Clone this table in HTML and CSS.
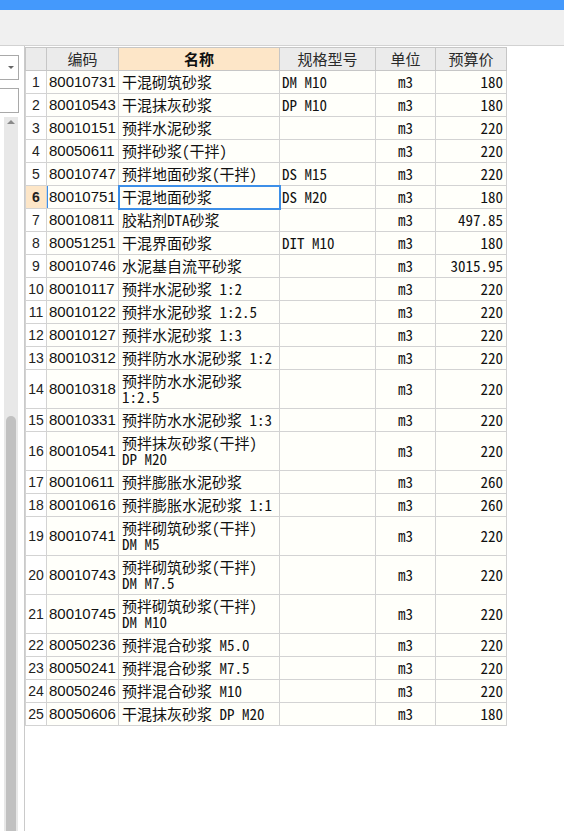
FILE: index.html
```html
<!DOCTYPE html>
<html lang="zh-CN">
<head>
<meta charset="utf-8">
<title>材料</title>
<link rel="stylesheet" href="styles.css">
</head>
<body>
<div class="topbar"></div>
<div class="toolbar"></div>
<div class="main">
  <aside class="side">
    <div class="combo"><span class="caret"></span></div>
    <div class="textbox"></div>
    <div class="scroll">
      <span class="arrow-up"></span>
      <div class="thumb"></div>
    </div>
  </aside>
  <div class="gridarea">
    <table class="grid">
      <colgroup>
        <col class="c-no"><col class="c-code"><col class="c-name"><col class="c-spec"><col class="c-unit"><col class="c-price">
      </colgroup>
      <thead>
        <tr><th></th><th>编码</th><th class="hl">名称</th><th>规格型号</th><th>单位</th><th>预算价</th></tr>
      </thead>
      <tbody>
        <tr><td class="no">1</td><td class="code">80010731</td><td class="name">干混砌筑砂浆</td><td class="spec">DM M10</td><td class="unit">m3</td><td class="price">180</td></tr>
        <tr><td class="no">2</td><td class="code">80010543</td><td class="name">干混抹灰砂浆</td><td class="spec">DP M10</td><td class="unit">m3</td><td class="price">180</td></tr>
        <tr><td class="no">3</td><td class="code">80010151</td><td class="name">预拌水泥砂浆</td><td class="spec"></td><td class="unit">m3</td><td class="price">220</td></tr>
        <tr><td class="no">4</td><td class="code">80050611</td><td class="name">预拌砂浆(干拌)</td><td class="spec"></td><td class="unit">m3</td><td class="price">220</td></tr>
        <tr><td class="no">5</td><td class="code">80010747</td><td class="name">预拌地面砂浆(干拌)</td><td class="spec">DS M15</td><td class="unit">m3</td><td class="price">220</td></tr>
        <tr class="cur"><td class="no">6</td><td class="code">80010751</td><td class="name sel">干混地面砂浆</td><td class="spec">DS M20</td><td class="unit">m3</td><td class="price">180</td></tr>
        <tr><td class="no">7</td><td class="code">80010811</td><td class="name">胶粘剂DTA砂浆</td><td class="spec"></td><td class="unit">m3</td><td class="price">497.85</td></tr>
        <tr><td class="no">8</td><td class="code">80051251</td><td class="name">干混界面砂浆</td><td class="spec">DIT M10</td><td class="unit">m3</td><td class="price">180</td></tr>
        <tr><td class="no">9</td><td class="code">80010746</td><td class="name">水泥基自流平砂浆</td><td class="spec"></td><td class="unit">m3</td><td class="price">3015.95</td></tr>
        <tr><td class="no">10</td><td class="code">80010117</td><td class="name">预拌水泥砂浆 1:2</td><td class="spec"></td><td class="unit">m3</td><td class="price">220</td></tr>
        <tr><td class="no">11</td><td class="code">80010122</td><td class="name">预拌水泥砂浆 1:2.5</td><td class="spec"></td><td class="unit">m3</td><td class="price">220</td></tr>
        <tr><td class="no">12</td><td class="code">80010127</td><td class="name">预拌水泥砂浆 1:3</td><td class="spec"></td><td class="unit">m3</td><td class="price">220</td></tr>
        <tr><td class="no">13</td><td class="code">80010312</td><td class="name">预拌防水水泥砂浆 1:2</td><td class="spec"></td><td class="unit">m3</td><td class="price">220</td></tr>
        <tr><td class="no">14</td><td class="code">80010318</td><td class="name">预拌防水水泥砂浆<br>1:2.5</td><td class="spec"></td><td class="unit">m3</td><td class="price">220</td></tr>
        <tr><td class="no">15</td><td class="code">80010331</td><td class="name">预拌防水水泥砂浆 1:3</td><td class="spec"></td><td class="unit">m3</td><td class="price">220</td></tr>
        <tr><td class="no">16</td><td class="code">80010541</td><td class="name">预拌抹灰砂浆(干拌)<br>DP M20</td><td class="spec"></td><td class="unit">m3</td><td class="price">220</td></tr>
        <tr><td class="no">17</td><td class="code">80010611</td><td class="name">预拌膨胀水泥砂浆</td><td class="spec"></td><td class="unit">m3</td><td class="price">260</td></tr>
        <tr><td class="no">18</td><td class="code">80010616</td><td class="name">预拌膨胀水泥砂浆 1:1</td><td class="spec"></td><td class="unit">m3</td><td class="price">260</td></tr>
        <tr><td class="no">19</td><td class="code">80010741</td><td class="name">预拌砌筑砂浆(干拌)<br>DM M5</td><td class="spec"></td><td class="unit">m3</td><td class="price">220</td></tr>
        <tr><td class="no">20</td><td class="code">80010743</td><td class="name">预拌砌筑砂浆(干拌)<br>DM M7.5</td><td class="spec"></td><td class="unit">m3</td><td class="price">220</td></tr>
        <tr><td class="no">21</td><td class="code">80010745</td><td class="name">预拌砌筑砂浆(干拌)<br>DM M10</td><td class="spec"></td><td class="unit">m3</td><td class="price">220</td></tr>
        <tr><td class="no">22</td><td class="code">80050236</td><td class="name">预拌混合砂浆 M5.0</td><td class="spec"></td><td class="unit">m3</td><td class="price">220</td></tr>
        <tr><td class="no">23</td><td class="code">80050241</td><td class="name">预拌混合砂浆 M7.5</td><td class="spec"></td><td class="unit">m3</td><td class="price">220</td></tr>
        <tr><td class="no">24</td><td class="code">80050246</td><td class="name">预拌混合砂浆 M10</td><td class="spec"></td><td class="unit">m3</td><td class="price">220</td></tr>
        <tr><td class="no">25</td><td class="code">80050606</td><td class="name">干混抹灰砂浆 DP M20</td><td class="spec"></td><td class="unit">m3</td><td class="price">180</td></tr>
      </tbody>
    </table>
  </div>
</div>
</body>
</html>
```

FILE: styles.css
```css
html, body {
  margin: 0;
  padding: 0;
  background: #ffffff;
  height: 831px;
  overflow: hidden;
}
body {
  font-family: "Noto Sans Mono CJK SC", "Noto Sans CJK SC", "Liberation Mono", monospace;
  font-size: 15px;
  color: #111;
}
.topbar {
  height: 10px;
  background: #4499fc;
}
.toolbar {
  height: 35px;
  background: #f0f0f0;
  border-bottom: 1px solid #d2d2d2;
}
.main {
  display: flex;
  height: 785px;
}
.side {
  width: 24px;
  border-right: 1px solid #cacaca;
  display: flex;
  flex-direction: column;
  box-sizing: content-box;
}
.combo {
  margin-top: 9px;
  margin-left: -1px;
  width: 17px;
  height: 23px;
  border: 1px solid #a9a9a9;
  background: #fff;
  display: flex;
  align-items: center;
  justify-content: center;
  padding-left: 1px;
}
.caret {
  width: 0;
  height: 0;
  border-left: 3px solid transparent;
  border-right: 3px solid transparent;
  border-top: 3px solid #666;
  margin-left: 2px;
}
.textbox {
  margin-top: 8px;
  margin-left: -1px;
  width: 18px;
  height: 23px;
  border: 1px solid #a9a9a9;
  background: #fff;
}
.scroll {
  margin-top: 4px;
  margin-left: 4px;
  width: 14px;
  flex: 1;
  background: #e8e8e8;
  display: flex;
  flex-direction: column;
  align-items: center;
}
.arrow-up {
  margin-top: 3px;
  width: 0;
  height: 0;
  border-left: 4px solid transparent;
  border-right: 4px solid transparent;
  border-bottom: 4px solid #8a8a8a;
}
.thumb {
  margin-top: auto;
  width: 10px;
  height: 415px;
  background: #c1c1c1;
  border-radius: 5px 5px 0 0;
}
.gridarea {
  flex: 1;
  padding-top: 1px;
}
.grid {
  border-collapse: collapse;
  table-layout: fixed;
  width: 482px;
  line-height: 16px;
}
.c-no { width: 21px; }
.c-code { width: 72px; }
.c-name { width: 161px; }
.c-spec { width: 96px; }
.c-unit { width: 60px; }
.c-price { width: 71px; }
.grid th,
.grid td {
  border: 1px solid #d3d3d3;
  padding: 3px 3px;
  vertical-align: middle;
  white-space: nowrap;
  overflow: hidden;
}
.grid th {
  background: #ebebeb;
  font-family: "Noto Sans CJK SC", sans-serif;
  font-weight: normal;
  color: #2a2a2a;
  border-color: #c6c6c6;
  text-align: center;
}
.grid th.hl {
  background: #fde6c8;
  font-weight: bold;
  color: #111;
}
.grid td {
  background: #fffffa;
}
.grid td.no {
  font-family: "Liberation Sans", Arial, sans-serif;
  font-size: 14px;
  text-align: center;
  padding: 3px 0;
  background: #fff;
  color: #222;
}
.grid td.code {
  font-family: "Liberation Sans", Arial, sans-serif;
  font-size: 15px;
  padding-left: 2px;
  padding-right: 1px;
}
.grid td.name {
  padding-left: 3px;
}
.grid td.spec {
  padding-left: 2px;
}
.grid td.unit {
  text-align: center;
}
.grid td.price {
  text-align: right;
  padding-right: 3px;
}
.grid tr.cur td.no {
  background: #fde6c8;
  font-weight: bold;
}
.grid tr.cur td.code {
  box-shadow: inset 1px 0 0 #3d8fe8;
}
.grid td.sel {
  outline: 2px solid #3d8fe8;
  outline-offset: -1px;
}
```
